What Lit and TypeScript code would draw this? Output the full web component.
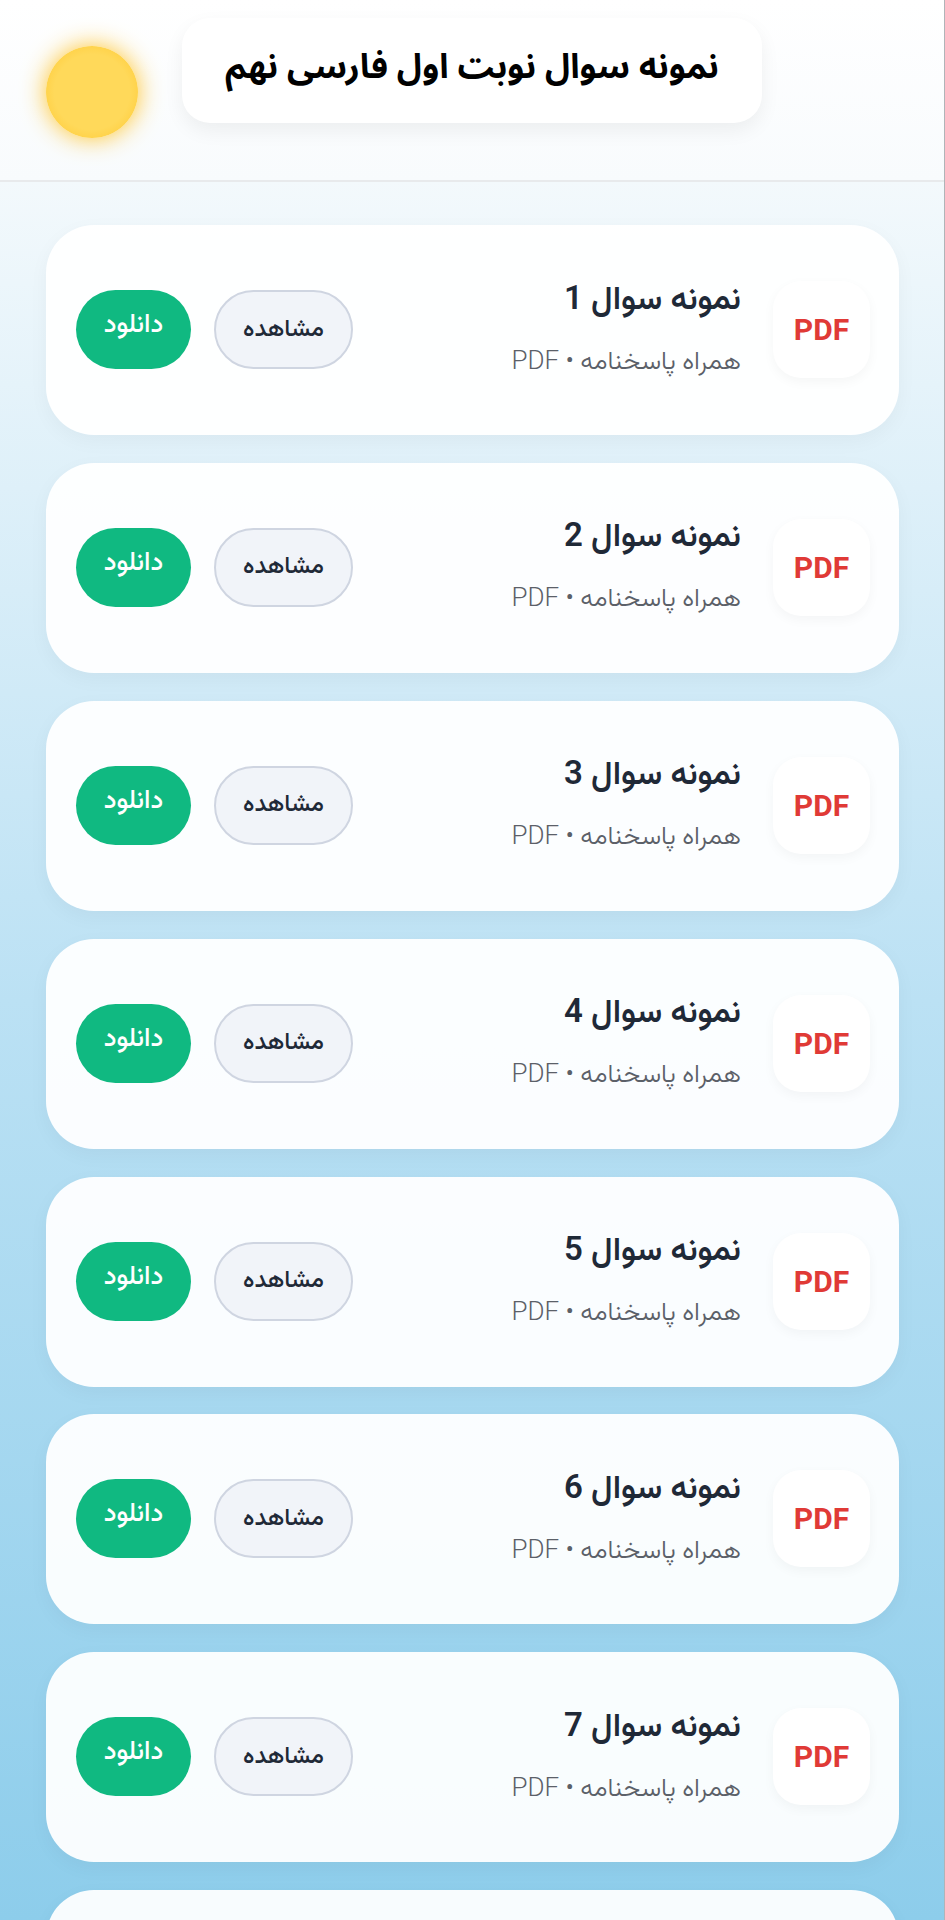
import { LitElement, html, css } from 'lit';
import { customElement } from 'lit/decorators.js';

const ITEMS = [1, 2, 3, 4, 5, 6, 7, 8];

@customElement('app-root')
export class AppRoot extends LitElement {
  static styles = css`
    :host {
      display: block;
      height: 1920px;
      overflow: hidden;
      font-family: Roboto, Vazirmatn, "DejaVu Sans", sans-serif;
      background: linear-gradient(180deg, #f3f9fc 180px, #bbe1f4 1000px, #8dcdeb 1920px);
      border-right: 1px solid #b0b4b8;
      box-sizing: border-box;
    }
    .header {
      height: 180px;
      display: flex;
      direction: ltr;
      align-items: flex-start;
      gap: 44px;
      padding: 0 46px;
      background: linear-gradient(180deg, #ffffff, #f8fbfd);
      border-bottom: 2px solid #e8eaec;
    }
    .sun {
      flex: none;
      width: 92px;
      height: 92px;
      margin-top: 46px;
      border-radius: 50%;
      background: radial-gradient(circle, #ffd95a 58%, #ffc62b 100%);
      box-shadow: 0 0 24px rgba(255, 190, 20, 0.9);
    }
    .title {
      flex: none;
      width: 580px;
      height: 105px;
      margin-top: 18px;
      box-sizing: border-box;
      display: flex;
      align-items: center;
      justify-content: center;
      padding-bottom: 8px;
      background: #fff;
      border-radius: 28px;
      box-shadow: 0 8px 20px rgba(0, 0, 0, 0.06);
      font-family: "Noto Sans Arabic", Vazirmatn, sans-serif;
      font-size: 34.2px;
      font-weight: 700;
      color: #000;
      direction: rtl;
      white-space: nowrap;
    }
    .list {
      display: flex;
      flex-direction: column;
      gap: 27.9px;
      padding: 43px 45px 0 46px;
    }
    .card {
      flex: none;
      height: 210px;
      box-sizing: border-box;
      display: flex;
      direction: rtl;
      align-items: center;
      gap: 32px;
      padding: 0 29px 1px 30px;
      background: rgba(255, 255, 255, 0.94);
      border-radius: 48px;
      box-shadow: 0 6px 20px rgba(0, 0, 0, 0.04);
    }
    .icon {
      flex: none;
      width: 97px;
      height: 97px;
      display: flex;
      align-items: center;
      justify-content: center;
      background: #fff;
      border-radius: 28px;
      box-shadow: 0 4px 12px rgba(0, 0, 0, 0.04);
      color: #e03a36;
      font-weight: 700;
      font-size: 30px;
    }
    .info {
      flex: 1;
      min-width: 0;
    }
    .name {
      font-size: 33px;
      font-weight: 600;
      color: #1f2937;
      line-height: 44px;
      margin-top: -6px;
      margin-bottom: 22px;
    }
    .sub {
      font-size: 26px;
      font-weight: 300;
      color: #5b6068;
      line-height: 36px;
    }
    .actions {
      flex: none;
      display: flex;
      gap: 23px;
    }
    .btn {
      height: 79px;
      box-sizing: border-box;
      display: flex;
      align-items: center;
      justify-content: center;
      border-radius: 40px;
      font-size: 24px;
      font-weight: 500;
    }
    .view {
      width: 139px;
      background: #f1f4f9;
      border: 2px solid #cfd5e1;
      color: #1f2937;
    }
    .dl {
      width: 115px;
      background: #10b981;
      color: #fff;
      font-size: 26px;
      padding-bottom: 8px;
    }
  `;

  renderCard(n: number) {
    return html`
      <div class="card">
        <div class="icon">PDF</div>
        <div class="info">
          <div class="name">نمونه سوال ${n}</div>
          <div class="sub">همراه پاسخنامه • PDF</div>
        </div>
        <div class="actions">
          <div class="btn view">مشاهده</div>
          <div class="btn dl">دانلود</div>
        </div>
      </div>
    `;
  }

  render() {
    return html`
      <div class="header">
        <div class="sun"></div>
        <div class="title">نمونه سوال نوبت اول فارسی نهم</div>
      </div>
      <div class="list">${ITEMS.map((n) => this.renderCard(n))}</div>
    `;
  }
}
